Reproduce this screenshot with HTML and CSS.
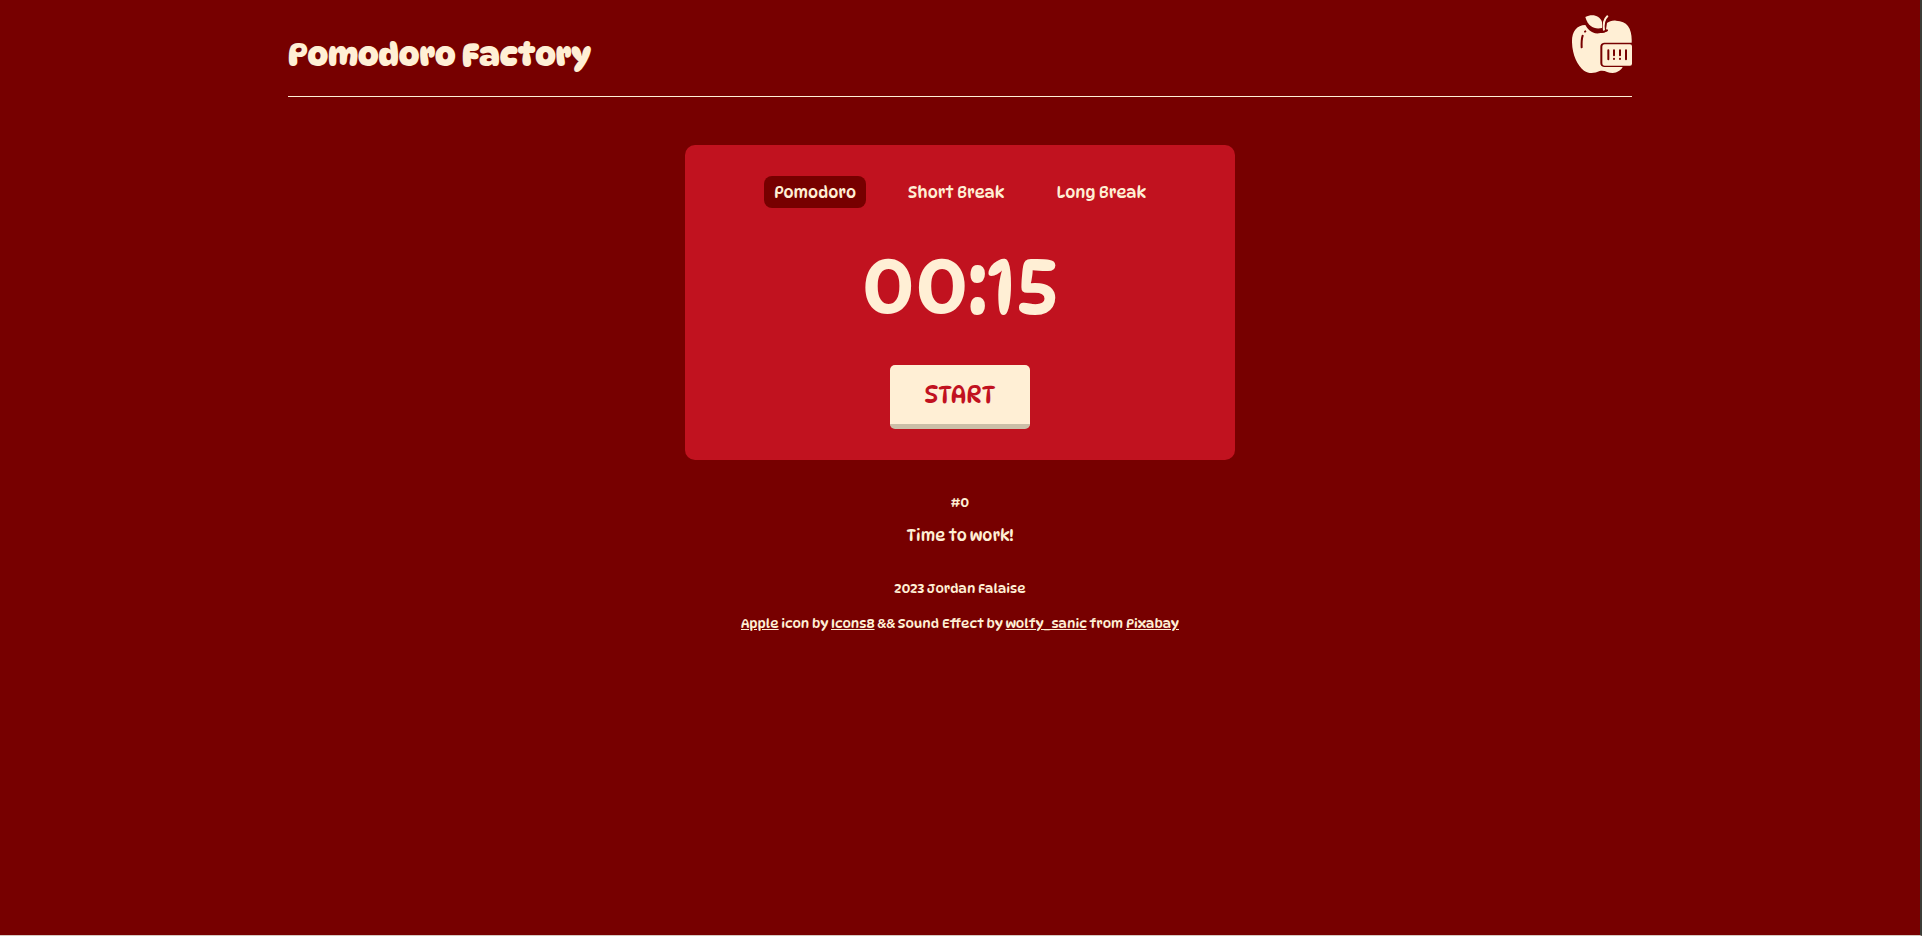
FILE: index.html
```html
<!DOCTYPE html>
<html lang="en">
<head>
<meta charset="utf-8">
<title>Pomodoro Factory</title>
<link rel="stylesheet" href="styles.css">
</head>
<body>
<div class="page">
  <header class="header">
    <h1 class="title">Pomodoro Factory</h1>
    <svg class="logo" viewBox="24 21 192 192" role="img" aria-label="Apple">
      <path class="cream" d="M122 84C108 88 97 83 88 76C83 71 79 66 76 60C50 60 35 80 36 112C37 150 52 182 72 197C89 208 105 204 119 198C134 194 143 204 158 204C172 203 183 196 188 186H132Q121 185 121 174V125Q121 114 132 113H215C217 72 203 48 168 47C156 46 149 49 141 54L138 73Q142 76 142 78Q132 84 122 84Z"/>
      <path class="cream" d="M76 36C98 24 120 33 126 51V69C105 74 84 66 76 36Z"/>
      <path class="stem" d="M142 34C132 43 129 57 132 77"/>
      <path class="groove" d="M112 77Q126 85 141 76"/>
      <path class="cream" d="M134 118H210Q216 118 216 124V176Q216 182 210 182H134Q127 182 127 174V126Q127 118 134 118Z"/>
      <path class="mark" d="M68 92Q64 104 65 127M75 80L76 79M145 136V163M198 136V163M162 136V151M162 161V162M180 136V151M180 161V162"/>
    </svg>
  </header>
  <main class="main">
    <section class="card">
      <nav class="modes">
        <button class="mode active" type="button">Pomodoro</button>
        <button class="mode" type="button">Short Break</button>
        <button class="mode" type="button">Long Break</button>
      </nav>
      <div class="time">00:15</div>
      <button class="start" type="button">START</button>
    </section>
    <p class="count">#0</p>
    <p class="message">Time to work!</p>
  </main>
  <footer class="footer">
    <p class="line">2023 Jordan Falaise</p>
    <p class="line"><a href="#">Apple</a> icon by <a href="#">Icons8</a> &amp;&amp; Sound Effect by <a href="#">wolfy_sanic</a> from <a href="#">Pixabay</a></p>
  </footer>
</div>
</body>
</html>
```
FILE: styles.css
```css
* { box-sizing: border-box; }
body {
  margin: 0;
  min-height: 100vh;
  background: #770000;
  color: #ffefd5;
  border-right: 2px solid #3c3c37;
  border-bottom: 1px solid #d8c8c0;
  font-family: DynaPuff, Lato, sans-serif;
  font-size: 16px;
  font-weight: 400;
}
.page { width: 70%; margin: 0 auto; }
.header {
  display: flex;
  justify-content: space-between;
  align-items: center;
  height: 97px;
  padding-bottom: 8px;
  border-bottom: 1px solid #ffefd5;
}
.title { margin: 22px 0 0; font-size: 32px; line-height: 44px; font-weight: 700; }
.logo { width: 64px; height: 64px; }
.cream { fill: #ffefd5; }
.stem, .mark, .groove { fill: none; stroke-width: 6px; stroke-linecap: round; }
.stem { stroke: #ffefd5; }
.mark, .groove { stroke: #770000; }
.main { display: flex; flex-direction: column; align-items: center; padding-top: 48px; }
.card {
  display: flex;
  flex-direction: column;
  align-items: center;
  width: 100%;
  max-width: 550px;
  padding: 31px 32px;
  border-radius: 10px;
  background: #c1121f;
}
.modes { display: flex; gap: 32px; }
.mode {
  height: 32px;
  padding: 0 10px;
  border: 0;
  border-radius: 8px;
  background: transparent;
  color: inherit;
  font: inherit;
}
.active { background: #770000; }
.time { margin: 32px 0; font-size: 80px; line-height: 93px; }
.start {
  height: 64px;
  width: 140px;
  border: 0;
  border-bottom: 5px solid #cbbfa8;
  border-radius: 5px;
  background: #ffefd5;
  color: #c1121f;
  font: inherit;
  font-size: 24px;
}
.count { margin: 32px 0 0; font-size: smaller; line-height: 20px; }
.message { margin: 12px 0 0; line-height: 24px; }
.footer { padding-top: 30px; text-align: center; font-size: smaller; line-height: 20px; }
.line { margin: 0 0 15px; }
.footer a { color: inherit; }
```
